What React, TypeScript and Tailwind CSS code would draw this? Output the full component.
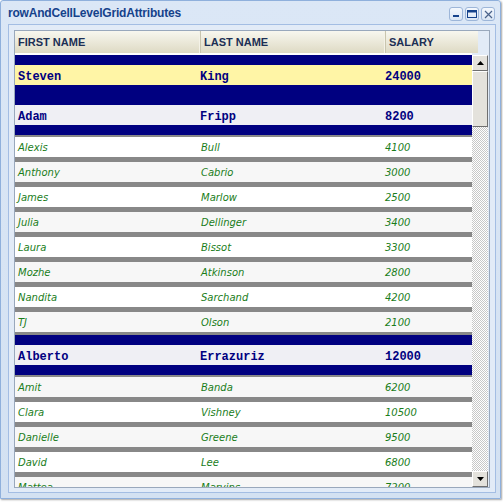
import React from 'react';

type Row = { first: string; last: string; salary: string; big?: boolean; yellow?: boolean };

const rows: Row[] = [
  { first: 'Steven', last: 'King', salary: '24000', big: true, yellow: true },
  { first: 'Adam', last: 'Fripp', salary: '8200', big: true },
  { first: 'Alexis', last: 'Bull', salary: '4100' },
  { first: 'Anthony', last: 'Cabrio', salary: '3000' },
  { first: 'James', last: 'Marlow', salary: '2500' },
  { first: 'Julia', last: 'Dellinger', salary: '3400' },
  { first: 'Laura', last: 'Bissot', salary: '3300' },
  { first: 'Mozhe', last: 'Atkinson', salary: '2800' },
  { first: 'Nandita', last: 'Sarchand', salary: '4200' },
  { first: 'TJ', last: 'Olson', salary: '2100' },
  { first: 'Alberto', last: 'Errazuriz', salary: '12000', big: true },
  { first: 'Amit', last: 'Banda', salary: '6200' },
  { first: 'Clara', last: 'Vishney', salary: '10500' },
  { first: 'Danielle', last: 'Greene', salary: '9500' },
  { first: 'David', last: 'Lee', salary: '6800' },
  { first: 'Mattea', last: 'Marvins', salary: '7200' },
];

function WindowButton({ children }: { children: React.ReactNode }) {
  return (
    <div className="w-[14px] h-[14px] rounded-[3px] border border-[#9db6d9] bg-gradient-to-b from-[#f4f8fd] to-[#d9e5f4] flex items-center justify-center">
      {children}
    </div>
  );
}

function GridRow({ row, index }: { row: Row; index: number }) {
  if (row.big) {
    return (
      <div className="border-y-[10px] border-[#000080]">
        <div
          className={`h-[20px] pt-[3px] flex items-center font-['Liberation_Mono',monospace] text-[12px] font-bold text-[#000080] ${
            row.yellow ? 'bg-[#fff5a6]' : 'bg-[#efeff4]'
          }`}
        >
          <div className="w-[185px] pl-[3px]">{row.first}</div>
          <div className="w-[185px]">{row.last}</div>
          <div className="flex-1">{row.salary}</div>
        </div>
      </div>
    );
  }
  return (
    <div className="border-t-[2px] border-b-[3px] border-[#888888]">
      <div
        className={`h-[20px] flex items-center font-['DejaVu_Sans',sans-serif] text-[10px] italic text-[#1a7d1a] ${
          index % 2 === 0 ? 'bg-white' : 'bg-[#f7f7f7]'
        }`}
      >
        <div className="w-[185px] pl-[3px]">{row.first}</div>
        <div className="w-[185px] pl-[1px]">{row.last}</div>
        <div className="flex-1">{row.salary}</div>
      </div>
    </div>
  );
}

function ScrollArrow({ up }: { up?: boolean }) {
  return (
    <div className="w-[16px] h-[16px] bg-[#e4e2dc] border border-t-[#ffffff] border-l-[#ffffff] border-r-[#6f6f6f] border-b-[#6f6f6f] flex items-center justify-center">
      <svg width="7" height="4" viewBox="0 0 7 4">
        {up ? <path d="M0 4 L3.5 0 L7 4 Z" fill="#000" /> : <path d="M0 0 L3.5 4 L7 0 Z" fill="#000" />}
      </svg>
    </div>
  );
}

export default function App() {
  return (
    <div className="w-[503px] h-[503px] bg-white">
      <div className="w-[501px] h-[499px] border border-[#8fb0dc] rounded-t-[3px] bg-gradient-to-b from-[#dbe7f6] to-[#d3e1f2] shadow-[1px_1px_2px_rgba(0,0,0,0.35)] flex flex-col">
        {/* title bar */}
        <div className="h-[23px] flex items-center justify-between pl-[7px] pr-[5px]">
          <span className="font-['Liberation_Sans',sans-serif] text-[12px] font-bold text-[#15428b] tracking-[-0.2px]">
            rowAndCellLevelGridAttributes
          </span>
          <div className="flex gap-[2px] mt-[3px]">
            <WindowButton>
              <svg width="8" height="8" viewBox="0 0 8 8">
                <rect x="1" y="5" width="6" height="2" fill="#15428b" />
              </svg>
            </WindowButton>
            <WindowButton>
              <svg width="10" height="8" viewBox="0 0 10 8">
                <rect x="0.5" y="0.5" width="9" height="7" fill="none" stroke="#15428b" />
                <rect x="0.5" y="0.5" width="9" height="2" fill="#15428b" />
              </svg>
            </WindowButton>
            <WindowButton>
              <svg width="9" height="9" viewBox="0 0 9 9">
                <path d="M1 1 L8 8 M8 1 L1 8" stroke="#4a628a" strokeWidth="1.2" />
              </svg>
            </WindowButton>
          </div>
        </div>
        {/* inner panel */}
        <div className="ml-[7px] mr-[4px] h-[469px] border border-[#a3bde3] bg-[#e2ebf7] p-[5px]">
          <div className="h-[458px] border border-[#99a8bc] flex flex-col bg-[#e2ebf7]">
            {/* header */}
            <div className="h-[22px] flex font-['Liberation_Sans',sans-serif] text-[11px] font-bold text-[#1c2f55]">
              <div className="w-[185px] pl-[3px] flex items-center bg-gradient-to-b from-[#f8f7ef] to-[#dedac4] border-r border-[#f4f2e8]">
                FIRST NAME
              </div>
              <div className="w-[185px] pl-[3px] flex items-center bg-gradient-to-b from-[#f8f7ef] to-[#dedac4] border-l border-[#c9c5ae] border-r border-r-[#f4f2e8]">
                LAST NAME
              </div>
              <div className="w-[93px] pl-[3px] flex items-center bg-gradient-to-b from-[#f8f7ef] to-[#dedac4] border-l border-[#c9c5ae]">
                SALARY
              </div>
            </div>
            {/* body */}
            <div className="flex-1 flex overflow-hidden">
              <div className="w-[457px] bg-white pt-[2px] overflow-hidden">
                {rows.map((r, i) => (
                  <GridRow key={r.first} row={r} index={i} />
                ))}
              </div>
              <div className="w-[16px] flex flex-col mt-[2px]">
                <ScrollArrow up />
                <div className="flex-1 bg-[repeating-conic-gradient(#c8c8c8_0_25%,#ffffff_0_50%)] bg-[length:2px_2px] flex flex-col">
                  <div className="h-[56px] bg-[#e4e2dc] border border-t-[#ffffff] border-l-[#ffffff] border-r-[#6f6f6f] border-b-[#6f6f6f]" />
                </div>
                <ScrollArrow />
              </div>
            </div>
          </div>
        </div>
      </div>
    </div>
  );
}
